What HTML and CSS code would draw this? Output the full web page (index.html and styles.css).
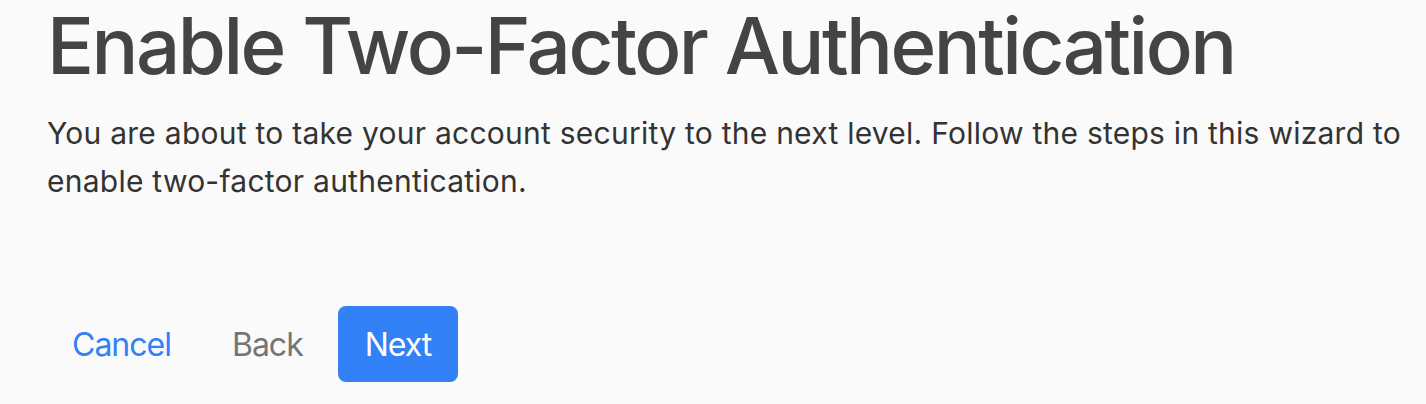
FILE: index.html
```html
<!DOCTYPE html>
<html lang="en">
<head>
<meta charset="utf-8">
<title>Enable Two-Factor Authentication</title>
<link rel="stylesheet" href="styles.css">
</head>
<body>
<main class="wizard">
  <h1 class="wizard-title">Enable Two-Factor Authentication</h1>
  <p class="wizard-lead">You are about to take your account security to the next level. Follow the steps in this wizard to enable two-factor authentication.</p>
  <div class="wizard-actions">
    <button class="btn btn-link" type="button">Cancel</button>
    <button class="btn btn-muted" type="button">Back</button>
    <button class="btn btn-primary" type="button">Next</button>
  </div>
</main>
</body>
</html>
```

FILE: styles.css
```css
html, body {
  margin: 0;
  padding: 0;
  background: #fafafa;
}

body {
  font-family: Inter, "Noto Sans", "Liberation Sans", sans-serif;
  color: #333;
}

.wizard {
  padding: 2px 20px 0 47px;
}

.wizard-title {
  margin: 0;
  font-size: 78px;
  line-height: 88px;
  font-weight: 500;
  color: #444;
  letter-spacing: -2.5px;
}

.wizard-lead {
  margin: 19px 0 0;
  font-size: 30px;
  line-height: 48px;
  font-weight: 400;
  color: #333;
  letter-spacing: 0.25px;
}

.wizard-actions {
  margin-top: 101px;
  display: flex;
  align-items: center;
  gap: 9px;
}

.btn {
  font-family: inherit;
  font-size: 32px;
  font-weight: 400;
  letter-spacing: -1px;
  height: 76px;
  padding: 0 26px;
  border: 0;
  border-radius: 8px;
  background: transparent;
  cursor: pointer;
}

.btn-link {
  margin-left: -1px;
  color: #3381f6;
}

.btn-muted {
  color: #757575;
}

.btn-primary {
  background: #3381f6;
  color: #fff;
  padding: 0 27px;
}
```
